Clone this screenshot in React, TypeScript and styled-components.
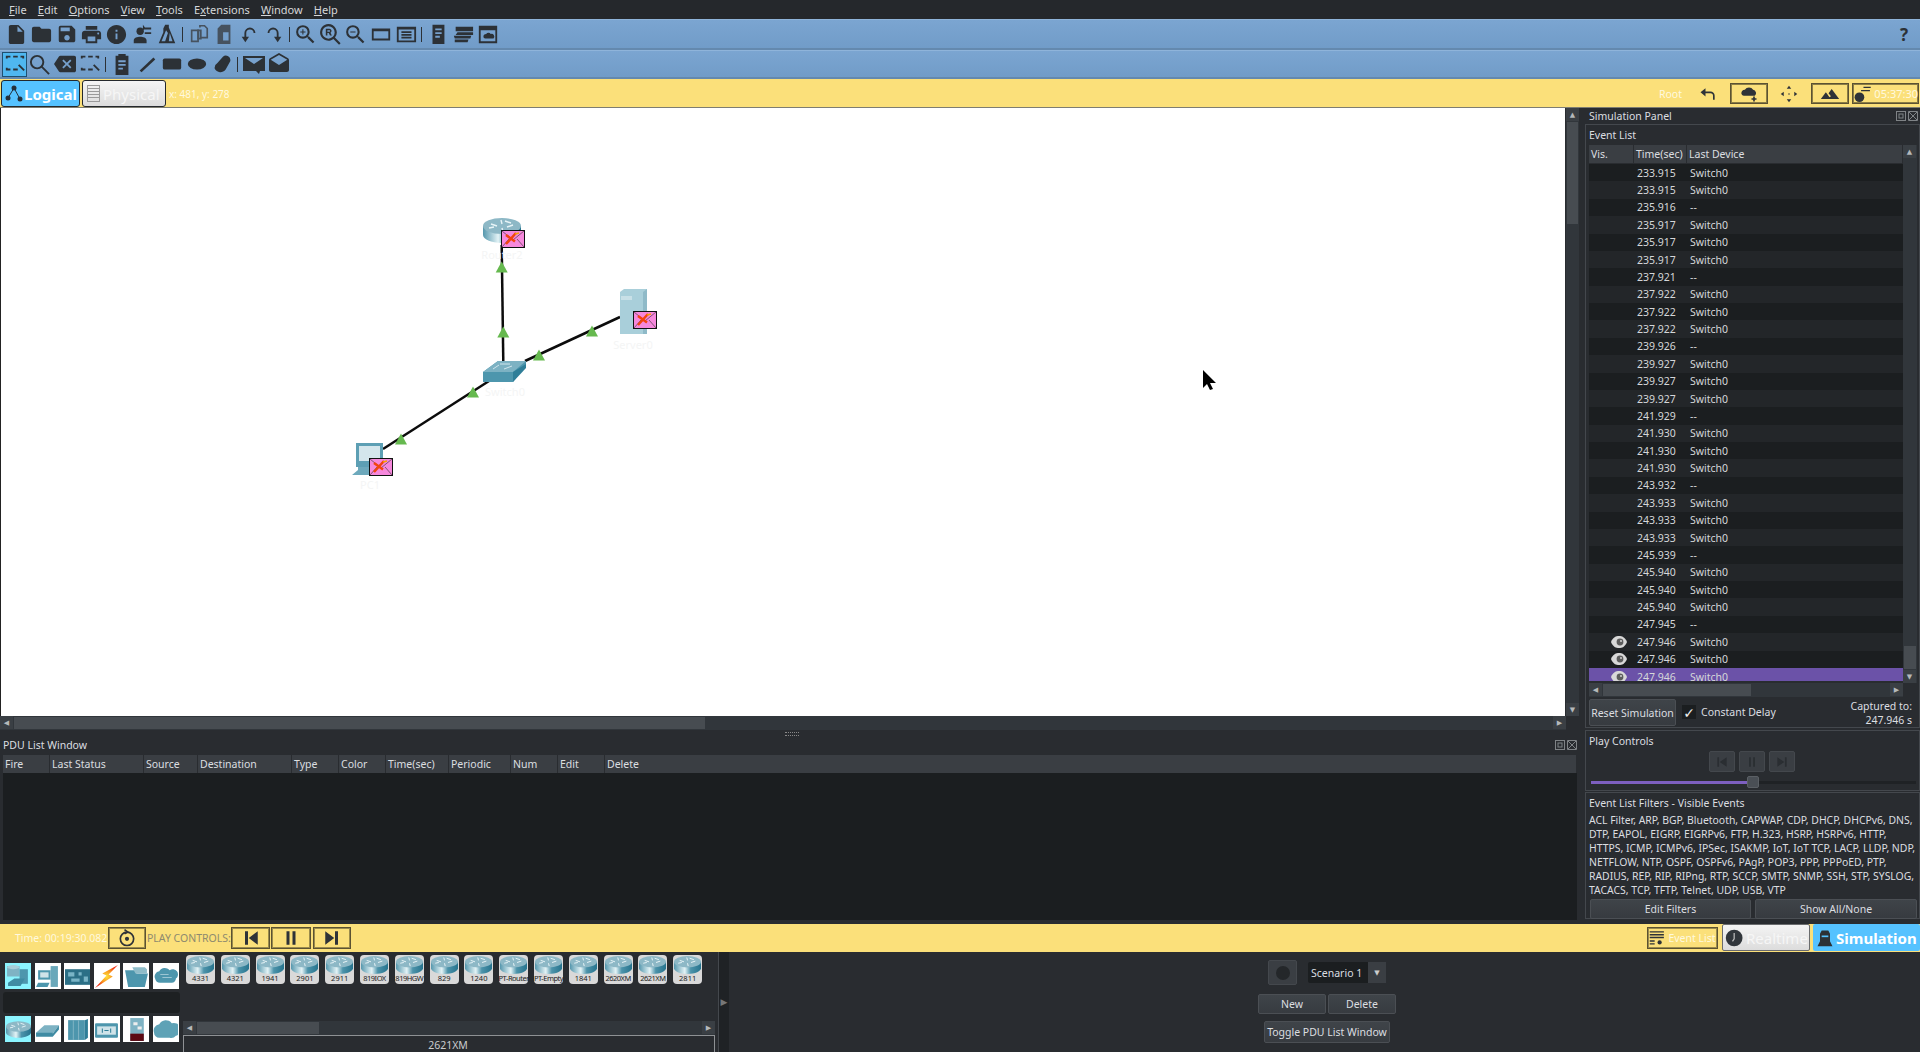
import React from "react";
import styled, { createGlobalStyle } from "styled-components";
import {
  MdInsertDriveFile, MdFolder, MdSave, MdPrint, MdInfo, MdZoomIn, MdZoomOut,
  MdBackspace, MdDrafts, MdTerrain,
} from "react-icons/md";

const Global = createGlobalStyle`
  html, body { margin: 0; padding: 0; height: 1052px; overflow: hidden; background: #292c30; }
  * { box-sizing: border-box; }
  body { font-family: "Noto Sans", "DejaVu Sans", sans-serif; font-size: 11px; color: #eff0f1; }
`;

const Page = styled.div`width:1920px;height:1052px;display:flex;flex-direction:column;overflow:hidden;background:#292c30;`;
const MenuBar = styled.div`height:19px;background:#25282c;display:flex;align-items:center;padding-left:9px;gap:11.2px;font-size:11px;color:#d5d7d9;`;
const MenuItem = styled.span`& u{text-underline-offset:1px;}`;
const ToolBar = styled.div<{ $h: number; $pad: number }>`
  height:${p => p.$h}px;display:flex;align-items:center;padding-left:${p => p.$pad}px;
  background:linear-gradient(#7ba5d1,#719cc8);border-top:1px solid #8fb4da;border-bottom:2px solid #6489ae;color:#2c3136;
`;
const ToolBtn = styled.div<{ $on?: boolean; $dim?: boolean }>`
  width:25px;height:25px;display:flex;align-items:center;justify-content:center;flex:none;
  color:${p => (p.$dim ? "#46525f" : "#2c3136")};
  ${p => p.$on && "background:#4fb7f0;border:1px solid #1f4f70;"}
  svg{display:block;}
`;
const ToolSep = styled.div`width:7px;height:15px;display:flex;justify-content:center;&::after{content:"";width:1px;height:100%;background:#2c3136;}`;
const Spacer = styled.div`flex:1;`;
const Help = styled.div`width:20px;font-size:17px;font-weight:700;color:#2c3136;`;

const YellowBar = styled.div`height:29px;background:#fbe07a;display:flex;align-items:center;padding:1px 1px 0 1px;border-bottom:1px solid #7d7d72;`;
const ModeTab = styled.div<{ $on?: boolean; $w: number }>`
  width:${p => p.$w}px;height:27px;border:1px solid #24282c;border-radius:3px;display:flex;align-items:center;gap:1px;padding-left:3px;flex:none;
  font-size:15px;overflow:hidden;
  ${p => p.$on ? "background:#55c2ff;color:#fff;font-weight:700;" : "background:linear-gradient(#f4f4f4,#dcdcdc);color:#f6f6f6;"}
`;
const Coords = styled.span`margin-left:3px;font-size:10px;color:#fff9df;`;
const RootLabel = styled.span`font-size:10.5px;color:#fff9df;margin-right:16px;`;
const BarIcon = styled.div<{ $w: number; $box?: boolean }>`
  width:${p => p.$w}px;height:21px;display:flex;align-items:center;justify-content:center;flex:none;color:#2f3338;
  ${p => p.$box && "border:1px solid #5b5232;box-shadow:inset 0 0 0 1px #8b7d45;"}
`;
const ClockText = styled.span`font-size:11px;color:#fff9df;margin-left:2px;`;
const Gap = styled.div<{ $w: number }>`width:${p => p.$w}px;flex:none;`;
const VGap = styled.div<{ $h: number }>`height:${p => p.$h}px;flex:none;`;

const Main = styled.div`display:flex;height:812px;flex:none;`;
const LeftCol = styled.div`width:1583px;display:flex;flex-direction:column;flex:none;`;
const CanvasRow = styled.div`height:608px;display:flex;flex:none;`;
const Canvas = styled.div`width:1565px;height:100%;background:#fff;border-left:1px solid #222;position:relative;overflow:hidden;margin-right:1px;`;
const CanvasSvg = styled.svg`position:absolute;left:0;top:0;`;
const VScroll = styled.div<{ $w?: number }>`width:${p => p.$w ?? 13}px;display:flex;flex-direction:column;background:#31363b;flex:none;`;
const ScrollArrow = styled.div`width:13px;height:13px;background:#3a3f44;display:flex;align-items:center;justify-content:center;flex:none;color:#b5b8ba;font-size:7px;line-height:1;`;
const VThumb = styled.div<{ $h: number }>`height:${p => p.$h}px;background:#474c51;border:1px solid #31363b;flex:none;`;
const Fill = styled.div`flex:1;`;
const HScroll = styled.div<{ $w?: number }>`height:14px;display:flex;background:#31363b;flex:none;${p => p.$w ? `width:${p.$w}px;` : ""}`;
const HThumb = styled.div<{ $w: number }>`width:${p => p.$w}px;background:#474c51;border:1px solid #31363b;flex:none;`;
const Splitter = styled.div`height:8px;display:flex;align-items:center;justify-content:center;flex:none;&::after{content:"";width:14px;height:2px;border-top:1px dotted #888;border-bottom:1px dotted #888;}`;

const PduWindow = styled.div`flex:1;display:flex;flex-direction:column;padding:0 5px 0 3px;`;
const DockTitle = styled.div`height:17px;display:flex;align-items:center;padding-bottom:4px;font-size:10.5px;color:#dcdee0;flex:none;`;
const DockBtns = styled.div`margin-left:auto;display:flex;gap:0;color:#7f8386;`;
const PduHead = styled.div`height:18px;display:grid;grid-template-columns:47px 94px 54px 94px 47px 47px 63px 62px 47px 47px 1fr;background:#3a3e43;flex:none;margin-right:1px;`;
const PduCell = styled.div`padding-left:2px;border-right:1px solid #292c30;font-size:10.5px;line-height:18px;color:#dcdee0;`;
const PduBody = styled.div`flex:1;background:#1b1e20;margin-right:1px;`;

const RightCol = styled.div`flex:1;display:flex;flex-direction:column;padding:0 0 0 2px;`;
const Group = styled.div<{ $h: number }>`height:${p => p.$h}px;border:1px solid #44484d;flex:none;display:flex;flex-direction:column;padding:0 1px 0 3px;`;
const GroupTitle = styled.div<{ $h?: number }>`height:${p => p.$h ?? 20}px;display:flex;align-items:center;font-size:10.5px;color:#dcdee0;flex:none;`;
const PanelTitle = styled.div`height:16px;display:flex;align-items:center;padding-left:4px;font-size:10.5px;color:#dcdee0;flex:none;padding-right:1px;`;
const EventTable = styled.div`display:flex;height:538px;flex:none;`;
const EventMain = styled.div`width:314px;flex:none;display:flex;flex-direction:column;`;
const EventHead = styled.div`height:18px;display:grid;grid-template-columns:45px 53px 1fr;background:#3a3e43;flex:none;margin-bottom:1px;`;
const EventRows = styled.div`height:517px;overflow:hidden;display:grid;grid-auto-rows:17.38px;`;
const EventRow = styled.div<{ $alt: boolean; $sel: boolean }>`
  display:grid;grid-template-columns:45px 53px 1fr;align-items:center;font-size:10.5px;color:#d5d7d9;
  background:${p => (p.$sel ? "#6b52a8" : p.$alt ? "#232629" : "#1b1e20")};
`;
const Vis = styled.div`padding-left:22px;display:flex;align-items:center;`;
const TimeCell = styled.div`padding-left:3px;`;
const DevCell = styled.div`padding-left:3px;`;
const EventTools = styled.div`height:33px;display:flex;align-items:flex-start;padding-top:2px;flex:none;`;
const Btn = styled.div<{ $w: number; $h: number }>`
  width:${p => p.$w}px;height:${p => p.$h}px;flex:none;display:flex;align-items:center;justify-content:center;
  background:linear-gradient(#3f4449,#373b40);border:1px solid #4b4f54;border-radius:2px;font-size:10.5px;color:#dcdee0;
`;
const Check = styled.div`width:14px;height:14px;margin:6px 0 0 6px;background:#1b1e20;display:flex;align-items:center;justify-content:center;font-size:14px;font-weight:700;color:#eee;flex:none;`;
const CheckLabel = styled.span`margin:6px 0 0 5px;font-size:10.5px;line-height:14px;color:#dcdee0;`;
const Captured = styled.div`margin-left:auto;text-align:right;font-size:10.5px;line-height:14px;color:#dcdee0;padding:0 6px 0 0;`;
const PlayRow = styled.div`display:flex;justify-content:center;gap:4px;padding-right:3px;`;
const PlayBtn = styled.div`width:26px;height:21px;background:#3a3e43;border:1px solid #44484d;border-radius:2px;display:flex;align-items:center;justify-content:center;color:#2a2e32;`;
const Slider = styled.div`height:12px;margin:4px 0 0 2px;display:flex;align-items:center;position:relative;`;
const SliderFill = styled.div`width:156px;height:3px;background:#7d5fc0;`;
const SliderRest = styled.div`flex:1;height:3px;background:#1f2225;margin-right:2px;`;
const SliderKnob = styled.div`position:absolute;left:156px;top:0;width:12px;height:12px;background:#4a4f55;border:1px solid #5b6065;border-radius:2px;`;
const FilterText = styled.div`font-size:10.42px;line-height:14px;color:#dcdee0;white-space:nowrap;height:86px;flex:none;`;
const BtnRow = styled.div`display:flex;gap:4px;padding:0 0 0 1px;`;

const BottomBar = styled.div`margin-top:4px;height:28px;background:#fbe07a;display:flex;align-items:center;flex:none;padding-bottom:1px;`;
const TimeLabel = styled.span`margin-left:15px;width:93px;flex:none;font-size:10.5px;color:#fff9df;`;
const PlayLabel = styled.span`width:84px;margin-left:1px;flex:none;font-size:10.5px;color:#8e8a6e;`;
const YellowBtn = styled.div<{ $w: number; $ml?: number }>`
  width:${p => p.$w}px;height:22px;margin-left:${p => p.$ml ?? 0}px;flex:none;border:1px solid #5b5232;box-shadow:inset 0 0 0 1px #9a8b4d;display:flex;align-items:center;justify-content:center;color:#2f3338;
`;
const EventBtnText = styled.span`font-size:10.5px;color:#fff9df;margin-left:2px;`;
const SimTab = styled.div<{ $on?: boolean; $w: number }>`
  width:${p => p.$w}px;height:27px;flex:none;border-radius:2px;display:flex;align-items:center;gap:1px;padding-left:2px;font-size:15px;
  ${p => p.$on ? "background:#55c2ff;color:#fff;font-weight:700;" : "background:linear-gradient(#f4f4f4,#dcdcdc);color:#f6f6f6;border:1px solid #6a6c6e;"}
`;

const Bottom = styled.div`height:100px;display:flex;flex:none;`;
const CategoryCol = styled.div`width:183px;padding:11px 0 0 5px;flex:none;display:flex;flex-direction:column;`;
const CatRow = styled.div`display:flex;gap:3.5px;height:26px;`;
const CatTile = styled.div<{ $on?: boolean }>`width:26px;height:26px;flex:none;background:${p => (p.$on ? "#8cf4ff" : "#fff")};display:flex;align-items:center;justify-content:center;`;
const CatStrip = styled.div`height:21px;margin:3px 3px 3px -2px;background:#1d2022;border-radius:3px;`;
const DevCol = styled.div`width:532px;flex:none;display:flex;flex-direction:column;`;
const DevTiles = styled.div`height:69px;display:flex;padding:3px 0 0 3px;gap:5.8px;flex:none;`;
const DevTile = styled.div`width:29px;height:29px;flex:none;background:#d9d9d9;border-radius:4px;display:flex;flex-direction:column;align-items:center;padding-top:1px;`;
const DevName = styled.span<{ $tight?: boolean }>`font-size:7.5px;line-height:8px;color:#222;white-space:nowrap;letter-spacing:${p => (p.$tight ? "-0.5px" : "0")};`;
const ModelBox = styled.div`height:17px;border:1px solid #8e9194;border-bottom:none;text-align:center;font-size:10.5px;line-height:18px;color:#c9cbcd;padding-right:2px;`;
const DividerCol = styled.div`margin-left:3px;width:11px;background:#1f2225;border-left:1px solid #44484d;display:flex;align-items:center;justify-content:center;color:#777;font-size:9px;flex:none;padding-bottom:2px;`;
const ScenarioPane = styled.div`flex:1;display:flex;flex-direction:column;align-items:flex-start;padding:8px 0 0 529px;`;
const ScenarioRow = styled.div`display:flex;align-items:center;margin-left:10px;height:25px;`;
const ScenarioIcon = styled.div`width:29px;height:25px;background:#3a3e43;border:1px solid #44484d;border-radius:2px;display:flex;align-items:center;justify-content:center;`;
const Dot = styled.div`width:14px;height:14px;border-radius:50%;background:#24272a;`;
const Combo = styled.div`margin-left:11px;width:78px;height:21px;background:#1b1e20;border-radius:2px;display:flex;align-items:center;padding-left:3px;font-size:10.5px;color:#dcdee0;`;
const ComboArrow = styled.div`margin-left:auto;width:18px;height:21px;background:#3a3e43;color:#ccc;font-size:7px;display:flex;align-items:center;justify-content:center;`;
const ScenarioBtns = styled.div`display:flex;gap:2px;margin-top:9px;`;
const ToggleWrap = styled.div`margin:7px 0 0 6px;`;

type P = { children?: React.ReactNode; s?: number; w?: number; h?: number; vb?: string };
const Svg = ({ children, s = 22, w, h, vb = "0 0 24 24" }: P) => (
  <svg width={w ?? s} height={h ?? s} viewBox={vb} fill="currentColor">{children}</svg>
);
const Stroke = ({ children, s = 22, sw = 2 }: P & { sw?: number }) => (
  <svg width={s} height={s} viewBox="0 0 24 24" fill="none" stroke="currentColor" strokeWidth={sw}>{children}</svg>
);

const tool1: (React.ReactNode | null)[] = [
  <MdInsertDriveFile size={23} />, <MdFolder size={23} />, <MdSave size={22} />, <MdPrint size={23} />, <MdInfo size={23} />,
  <Svg><circle cx="10" cy="9" r="4" /><path d="M3 22v-3c0-3 4-4 7-4s7 1 7 4v3zM14 5h8v2h-8zM15 10h7v2h-7zM13 2l3 4-3 2z" /></Svg>,
  <Svg><path d="M10 2h4v3l7 17H3l5-12V6zM11 8l-5 12h4l3-9zM15 11l-1 9h4z" fillRule="evenodd" /></Svg>,
  null,
  <Stroke sw={1.8}><path d="M4 8h7v12H4zM13 5V3h5l3 3v10h-7" /><path d="M11 8h3v9h-3z" fill="currentColor" fillOpacity=".4" /></Stroke>,
  <Svg><path fillRule="evenodd" d="M5 6l4-4h10v21H5zM11 10v9h6v-9z" /></Svg>,
  <Stroke><path d="M18 11a5 5 0 0 0-10 0v6" /><path d="M4 15l4 6 4-6z" fill="currentColor" stroke="none" /></Stroke>,
  <Stroke><path d="M6 11a5 5 0 0 1 10 0v6" /><path d="M12 15l4 6 4-6z" fill="currentColor" stroke="none" /></Stroke>,
  null,
  <MdZoomIn size={25} />,
  <Svg s={25}><path fillRule="evenodd" d="M10 2a8 8 0 0 1 6.300 12.900l5.400 5.400-1.500 1.500-5.400-5.400A8 8 0 1 1 10 2zm0 2a6 6 0 1 0 0 12 6 6 0 0 0 0-12zM7.500 6.500H11a2 2 0 0 1 1 3.700l1.300 2.800h-1.800L10.300 10.500H9V13H7.500zM9 8v1.300h2a.6.6 0 0 0 0-1.300z" /></Svg>,
  <MdZoomOut size={25} />,
  <Svg><path fillRule="evenodd" d="M2 6h20v13H2zM4 9v8h16V9z" /></Svg>,
  <Svg><path fillRule="evenodd" d="M2 4h21v17H2zM4 7v12h17V7zM7 9h11v2H7zM7 12h11v2H7zM7 15h11v2H7z" /></Svg>,
  null,
  <Svg><path fillRule="evenodd" d="M6 2h13v21H6zM9 6v2h7V6zM9 10v2h7v-2zM9 14v2h5v-2z" /></Svg>,
  <Svg><path d="M4 4h19v5H4zM6 10h17v3H4zM2 14h19l-1 3H3zM3 18h15l-1 3H3z" /></Svg>,
  <Svg><path fillRule="evenodd" d="M2 3h20v19H2zM4 8v12h16V8zM7 15a3 3 0 0 1 3-3 3 3 0 0 1 5 0 3 3 0 0 1 3 5H9a2 2 0 0 1-2-2z" /></Svg>,
];
const DashRect = () => (
  <svg width="22" height="22" viewBox="0 0 24 24" fill="none" stroke="currentColor" strokeWidth="2">
    <path d="M2 4h20M2 18h14M3 4v2M21 4v2M3 16v2" strokeDasharray="5 3" /><path d="M16 13l6 6" />
  </svg>
);
const tool2: (React.ReactNode | null)[] = [
  <DashRect />,
  <Stroke s={23}><circle cx="9.500" cy="9.500" r="6.500" /><path d="M14 14l8 8" /></Stroke>,
  <MdBackspace size={22} />, <DashRect />, null,
  <Svg><path fillRule="evenodd" d="M5 3h3V1h8v2h3v21H5zM8 8v2h8V8zM8 12v2h8v-2zM8 16v2h5v-2z" /></Svg>,
  <Svg><path d="M4 19L19 5l2 2L6 21z" /></Svg>,
  <Svg><rect x="2" y="6" width="20" height="12" rx="2" /></Svg>,
  <Svg><ellipse cx="12" cy="12" rx="10" ry="6" /></Svg>,
  <Svg><path d="M4 17a6 6 0 0 1 3-6l6-7a5 5 0 0 1 8 5l-5 9a7 7 0 0 1-12-1z" /></Svg>,
  null,
  <Svg s={24}><path fillRule="evenodd" d="M1 4h22v15h-5l-1 3-3-3H1zM3 6l9 6 9-6z" /></Svg>,
  <MdDrafts size={24} />,
];

const LogicalIcon = () => (
  <svg width="18" height="20" viewBox="0 0 18 20"><path d="M3 14L9 4l6 11" stroke="#25303a" fill="none" strokeWidth="1" /><circle cx="3" cy="14" r="2.500" fill="#25303a" /><circle cx="9" cy="4" r="2.500" fill="#25303a" /><circle cx="15" cy="15" r="2.500" fill="#25303a" /></svg>
);
const PhysicalIcon = () => (
  <svg width="16" height="20" viewBox="0 0 16 20" fill="none" stroke="#9a9a9a"><rect x="1.500" y="1.500" width="12" height="16" />{[4, 7, 10, 13].map(y => <path key={y} d={`M2 ${y}.5h11`} />)}</svg>
);

const Defs = () => (
  <svg width="0" height="0" style={{ position: "absolute" }}>
    <defs>
      <linearGradient id="rt" x1="0" x2="1" y1="0" y2="0">
        <stop offset="0" stopColor="#5597ad" /><stop offset=".4" stopColor="#e3f3f6" /><stop offset=".62" stopColor="#4c93aa" /><stop offset="1" stopColor="#27748e" />
      </linearGradient>
      <radialGradient id="bolt"><stop offset="0" stopColor="#ffe23a" /><stop offset=".6" stopColor="#f78a1c" /><stop offset="1" stopColor="#ee2a10" /></radialGradient>
    </defs>
  </svg>
);
const RouterShape = () => (
  <g>
    <path d="M0 8v9c0 4 8 8 19 8s19-4 19-8V8z" fill="url(#rt)" />
    <ellipse cx="19" cy="8" rx="19" ry="8" fill="#8db8c6" />
    <path d="M8 6l6 2M11 9l-5 1M22 3l6 2M30 7l-6 2M18 2l1 4M19 10l1 4" stroke="#e8f4f7" strokeWidth="1.400" fill="none" />
  </g>
);
const Envelope = ({ x, y }: { x: number; y: number }) => (
  <g transform={`translate(${x} ${y})`}>
    <rect x=".5" y=".5" width="23" height="17" fill="#f688dc" stroke="#111" />
    <path d="M1 1l11 9 11-9M1 17l7-8M23 17l-7-8" fill="none" stroke="#333" strokeWidth=".6" />
    <path d="M5 14L15 3M5 5l9 6.500" stroke="#f2440f" strokeWidth="2.500" fill="none" />
    <path d="M14 4l4-1" stroke="#f5a000" strokeWidth="1.500" />
  </g>
);
const Tri = ({ x, y }: { x: number; y: number }) => <path d={`M${x} ${y - 5.5}l6 11h-12z`} fill="#66b94f" />;
const Lbl = ({ x, y, t }: { x: number; y: number; t: string }) => <text x={x} y={y} fontSize="11" fill="#f4f5f5" textAnchor="middle" fontFamily="Noto Sans">{t}</text>;

const Diagram = () => (
  <CanvasSvg width="1564" height="608" viewBox="1 108 1564 608">
    <g stroke="#0c0c0c" strokeWidth="2.500" fill="none">
      <path d="M501.700 245L503.300 362" />
      <path d="M525 361L620 317" />
      <path d="M383 449L489 381" />
    </g>
    <g transform="translate(483 218)"><RouterShape /></g>
    <g>
      <path d="M483 372l15-11h28l0 4-13 17h-30z" fill="#4d96ad" />
      <path d="M483 372l15-11h28l-13 11z" fill="#7db2c3" />
      <path d="M513 372l13-8v4l-13 14z" fill="#2f7e98" />
      <path d="M493 369l6-4M504 369l8-3M500 364h10" stroke="#cfe5ec" strokeWidth="1" />
    </g>
    <g>
      <path d="M620 292l4-3h23v45h-27z" fill="#a9cfda" />
      <path d="M643 292l4-3v45l-4 0z" fill="#8fbac8" />
      <rect x="621" y="296" width="11" height="4" fill="#c8e0e7" />
    </g>
    <g>
      <rect x="356" y="443" width="27" height="24" fill="#5d9fb4" />
      <rect x="359" y="446" width="21" height="15" fill="#d4e6ec" />
      <path d="M358 467h24v3h-24zM352 475l6-5h24v5z" fill="#6da9bc" />
    </g>
    <Envelope x={501} y={230} />
    <Envelope x={633} y={311} />
    <Envelope x={369} y={458} />
    <Tri x={501.700} y={267} /><Tri x={503.300} y={332} /><Tri x={592} y={331} /><Tri x={539} y={355} /><Tri x={473} y={392} /><Tri x={401} y={439} />
    <Lbl x={502} y={259} t="Router2" /><Lbl x={633} y={349} t="Server0" /><Lbl x={505} y={396} t="Switch0" /><Lbl x={370} y={489} t="PC1" />
    <path d="M1203 370v18l4-4 3 6 3-1-3-6h6z" fill="#000" />
  </CanvasSvg>
);

const EyeIcon = () => (
  <svg width="16" height="12" viewBox="0 0 16 12"><path d="M0 6c2-5 5-6 8-6s6 1 8 6c-2 5-5 6-8 6s-6-1-8-6z" fill="#d8d8d8" /><circle cx="9" cy="6" r="3.400" fill="#5c5c5c" /><circle cx="10" cy="5" r=".9" fill="#ddd" /></svg>
);

const base: [string, string][] = [
  ["233.915", "Switch0"], ["233.915", "Switch0"], ["235.916", "--"], ["235.917", "Switch0"], ["235.917", "Switch0"], ["235.917", "Switch0"],
  ["237.921", "--"], ["237.922", "Switch0"], ["237.922", "Switch0"], ["237.922", "Switch0"], ["239.926", "--"], ["239.927", "Switch0"],
  ["239.927", "Switch0"], ["239.927", "Switch0"], ["241.929", "--"], ["241.930", "Switch0"], ["241.930", "Switch0"], ["241.930", "Switch0"],
  ["243.932", "--"], ["243.933", "Switch0"], ["243.933", "Switch0"], ["243.933", "Switch0"], ["245.939", "--"], ["245.940", "Switch0"],
  ["245.940", "Switch0"], ["245.940", "Switch0"], ["247.945", "--"], ["247.946", "Switch0"], ["247.946", "Switch0"], ["247.946", "Switch0"],
];
const pduCols = ["Fire", "Last Status", "Source", "Destination", "Type", "Color", "Time(sec)", "Periodic", "Num", "Edit", "Delete"];
const filters = [
  "ACL Filter, ARP, BGP, Bluetooth, CAPWAP, CDP, DHCP, DHCPv6, DNS,",
  "DTP, EAPOL, EIGRP, EIGRPv6, FTP, H.323, HSRP, HSRPv6, HTTP,",
  "HTTPS, ICMP, ICMPv6, IPSec, ISAKMP, IoT, IoT TCP, LACP, LLDP, NDP,",
  "NETFLOW, NTP, OSPF, OSPFv6, PAgP, POP3, PPP, PPPoED, PTP,",
  "RADIUS, REP, RIP, RIPng, RTP, SCCP, SMTP, SNMP, SSH, STP, SYSLOG,",
  "TACACS, TCP, TFTP, Telnet, UDP, USB, VTP",
];
const models: [string, boolean?][] = [["4331"], ["4321"], ["1941"], ["2901"], ["2911"], ["819IOX", true], ["819HGW", true], ["829"], ["1240"], ["PT-Router", true], ["PT-Empty", true], ["1841"], ["2620XM", true], ["2621XM", true], ["2811"]];
const DockIcons = () => (
  <DockBtns>
    <svg width="12" height="12" viewBox="0 0 12 12" fill="none" stroke="currentColor"><rect x="1.500" y="1.500" width="9" height="9" /><rect x="4" y="4" width="4" height="4" /></svg>
    <svg width="12" height="12" viewBox="0 0 12 12" fill="none" stroke="currentColor"><path d="M2 2l8 8M10 2l-8 8M1.500 1.500h9v9h-9z" /></svg>
  </DockBtns>
);
const catTop = [
  <Svg s={25}><rect x="1" y="2" width="12" height="10" fill="#7fb3c4" /><ellipse cx="7" cy="3" rx="6" ry="2" fill="#a8ced9" /><rect x="13" y="5" width="8" height="14" fill="#4d96ad" /><path d="M2 18l6-4h10l-4 7H2z" fill="#3f8ba3" /></Svg>,
  <Svg s={25}><rect x="3" y="6" width="12" height="9" fill="#4d96ad" /><rect x="5" y="8" width="8" height="5" fill="#cfe3e9" /><rect x="15" y="2" width="7" height="20" fill="#6aa8ba" /><path d="M3 18h11l-2 4H1z" fill="#4d96ad" /></Svg>,
  <Svg s={25}><rect x="0" y="5" width="24" height="15" fill="#2b6f86" /><path d="M3 8h6v4H3zM13 8h3v3h-3zM18 12h4v5h-4zM6 14h8v3H6z" fill="#79b4c6" /></Svg>,
  <Svg s={25}><path d="M23 1L8 9l4 2L1 23l17-11-4-2z" fill="url(#bolt)" /></Svg>,
  <Svg s={25}><path d="M1 6h9l2 3h11l-3 13H4z" fill="#4d96ad" /><path d="M8 3h12l2 2v4H11z" fill="#8fbcc9" /></Svg>,
  <Svg s={25}><path d="M2 14a5 5 0 0 1 4-7 6 6 0 0 1 10-1 5 5 0 0 1 6 8 4 4 0 0 1-4 4H7a5 5 0 0 1-5-4z" fill="#4d96ad" /><path d="M7 10h8M9 13h9" stroke="#9cc6d3" /></Svg>,
];
const catBot = [
  <svg width="25" height="17" viewBox="0 0 38 25"><RouterShape /></svg>,
  <Svg s={25}><path d="M1 15l8-7h14l-6 8H1z" fill="#7db2c3" /><path d="M1 15h16v4H1zM17 16l6-8v4l-6 7z" fill="#3f8ba3" /></Svg>,
  <Svg s={25}><rect x="3" y="3" width="16" height="19" fill="#4d96ad" /><path d="M19 3l3-1v18l-3 2z" fill="#2f7e98" /><path d="M8 3v19M13 3v19" stroke="#7db2c3" /></Svg>,
  <Svg s={25}><rect x="1" y="6" width="22" height="14" rx="1" fill="#4d96ad" /><rect x="3" y="9" width="18" height="8" fill="#cfe3e9" /><path d="M10 13h4M8 11v4M16 11v4" stroke="#2f7e98" /></Svg>,
  <Svg s={25}><rect x="6" y="1" width="13" height="22" fill="#7fb3c4" /><rect x="6" y="16" width="13" height="7" fill="#5c0a14" /><path d="M9 5h4v3H9zM13 9h4v3h-4z" fill="#eee" /></Svg>,
  <Svg s={25}><path d="M1 15a6 6 0 0 1 5-8 7 7 0 0 1 12-1 6 6 0 0 1 4 12 6 6 0 0 1-6 2H6a5 5 0 0 1-5-5z" fill="#5ea2b6" /></Svg>,
];

export default function App() {
  return (
    <Page>
      <Global />
      <Defs />
      <MenuBar>
        {["File", "Edit", "Options", "View", "Tools", "Extensions", "Window", "Help"].map(m => {
          const i = m === "Extensions" ? 1 : 0;
          return <MenuItem key={m}>{m.slice(0, i)}<u>{m[i]}</u>{m.slice(i + 1)}</MenuItem>;
        })}
      </MenuBar>
      <ToolBar $h={31} $pad={4}>
        {tool1.map((t, i) => t === null ? <ToolSep key={i} /> : <ToolBtn key={i} $dim={i === 8 || i === 9}>{t}</ToolBtn>)}
        <Spacer /><Help>?</Help>
      </ToolBar>
      <ToolBar $h={29} $pad={2}>
        {tool2.map((t, i) => t === null ? <ToolSep key={i} /> : <ToolBtn key={i} $on={i === 0}>{t}</ToolBtn>)}
      </ToolBar>
      <YellowBar>
        <ModeTab $on $w={79}><LogicalIcon />Logical</ModeTab>
        <Gap $w={2} />
        <ModeTab $w={84}><PhysicalIcon />Physical</ModeTab>
        <Coords>x: 481, y: 278</Coords>
        <Spacer />
        <RootLabel>Root</RootLabel>
        <BarIcon $w={20}><Svg s={20}><path d="M9 5L3 10l6 5v-4h6a3 3 0 0 1 3 3v5h2v-5a5 5 0 0 0-5-5H9z" /></Svg></BarIcon>
        <Gap $w={12} />
        <BarIcon $w={38} $box><Svg s={20}><path d="M3 12a4 4 0 0 1 4-5 6 6 0 0 1 10 0 4 4 0 0 1 2 7H6a3 3 0 0 1-3-2zM17 15h2v2h2v2h-2v2h-2v-2h-2v-2h2z" /></Svg></BarIcon>
        <Gap $w={11} />
        <BarIcon $w={20}><Svg s={18}><path d="M12 1l3 4H9zM12 23l-3-4h6zM1 12l4-3v6zM23 12l-4 3V9z" /><circle cx="12" cy="12" r="1" /></Svg></BarIcon>
        <Gap $w={12} />
        <BarIcon $w={38} $box><MdTerrain size={20} /></BarIcon>
        <Gap $w={3} />
        <BarIcon $w={67} $box>
          <Svg s={20}><circle cx="8" cy="16" r="6" /><path d="M10 7h11v1.500H10zM13 3h9v1.500h-9z" /></Svg>
          <ClockText>05:37:30</ClockText>
        </BarIcon>
      </YellowBar>
      <Main>
        <LeftCol>
          <CanvasRow>
            <Canvas><Diagram /></Canvas>
            <VScroll>
              <ScrollArrow>▲</ScrollArrow><VThumb $h={104} /><Fill />
              <ScrollArrow>▼</ScrollArrow>
            </VScroll>
          </CanvasRow>
          <HScroll $w={1566}>
            <ScrollArrow>◀</ScrollArrow><HThumb $w={693} /><Fill /><ScrollArrow>▶</ScrollArrow>
          </HScroll>
          <Splitter />
          <PduWindow>
            <DockTitle>PDU List Window<DockIcons /></DockTitle>
            <PduHead>{pduCols.map(c => <PduCell key={c}>{c}</PduCell>)}</PduHead>
            <PduBody />
          </PduWindow>
        </LeftCol>
        <RightCol>
          <PanelTitle>Simulation Panel<DockIcons /></PanelTitle>
          <Group $h={604}>
            <GroupTitle>Event List</GroupTitle>
            <EventTable>
              <EventMain>
                <EventHead><PduCell>Vis.</PduCell><PduCell>Time(sec)</PduCell><PduCell>Last Device</PduCell></EventHead>
                <EventRows>
                  {base.map(([t, d], i) => (
                    <EventRow key={i} $alt={i % 2 === 1} $sel={i === 29}>
                      <Vis>{i >= 27 && <EyeIcon />}</Vis>
                      <TimeCell>{t}</TimeCell>
                      <DevCell>{d}</DevCell>
                    </EventRow>
                  ))}
                </EventRows>
              </EventMain>
              <VScroll $w={14}>
                <ScrollArrow>▲</ScrollArrow><Fill /><VThumb $h={25} /><ScrollArrow>▼</ScrollArrow>
              </VScroll>
            </EventTable>
            <HScroll $w={314}>
              <ScrollArrow>◀</ScrollArrow><HThumb $w={150} /><Fill /><ScrollArrow>▶</ScrollArrow>
            </HScroll>
            <EventTools>
              <Btn $w={87} $h={27}>Reset Simulation</Btn>
              <Check>✓</Check>
              <CheckLabel>Constant Delay</CheckLabel>
              <Captured>Captured to:<br />247.946 s</Captured>
            </EventTools>
          </Group>
          <VGap $h={2} />
          <Group $h={61}>
            <GroupTitle>Play Controls</GroupTitle>
            <PlayRow>
              <PlayBtn><Svg s={14}><path d="M4 4h3v16H4zM20 4v16L8 12z" /></Svg></PlayBtn>
              <PlayBtn><Svg s={14}><path d="M7 4h3v16H7zM14 4h3v16h-3z" /></Svg></PlayBtn>
              <PlayBtn><Svg s={14}><path d="M17 4h3v16h-3zM4 4v16l12-8z" /></Svg></PlayBtn>
            </PlayRow>
            <Slider><SliderFill /><SliderRest /><SliderKnob /></Slider>
          </Group>
          <VGap $h={1} />
          <Group $h={127}>
            <GroupTitle $h={20}>Event List Filters - Visible Events</GroupTitle>
            <FilterText>{filters.map(l => <div key={l}>{l}</div>)}</FilterText>
            <BtnRow><Btn $w={161} $h={20}>Edit Filters</Btn><Btn $w={162} $h={20}>Show All/None</Btn></BtnRow>
          </Group>
        </RightCol>
      </Main>
      <BottomBar>
        <TimeLabel>Time: 00:19:30.082</TimeLabel>
        <YellowBtn $w={38}>
          <svg width="20" height="20" viewBox="0 0 24 24" fill="none" stroke="currentColor" strokeWidth="2"><circle cx="12" cy="13" r="8" /><circle cx="12" cy="13" r="1.500" fill="currentColor" /><path d="M9 2l4 3-4 2" /></svg>
        </YellowBtn>
        <PlayLabel>PLAY CONTROLS:</PlayLabel>
        <YellowBtn $w={39}><Svg s={18}><path d="M4 3h4v18H4zM21 3v18L9 12z" /></Svg></YellowBtn>
        <YellowBtn $w={40} $ml={1}><Svg s={18}><path d="M6 3h4v18H6zM14 3h4v18h-4z" /></Svg></YellowBtn>
        <YellowBtn $w={38} $ml={2}><Svg s={18}><path d="M16 3h4v18h-4zM3 3v18l12-9z" /></Svg></YellowBtn>
        <Spacer />
        <YellowBtn $w={71}>
          <Svg s={17}><path d="M1 3h20v2H1zM1 7h20v2H1zM1 11h20v2H1zM1 16h7v2H1zM1 20h7v2H1z" /><circle cx="15" cy="19" r="3" /></Svg>
          <EventBtnText>Event List</EventBtnText>
        </YellowBtn>
        <Gap $w={4} />
        <SimTab $w={88}><Svg s={20}><circle cx="11" cy="12" r="10" fill="#31363b" /><path d="M11 6v7l-2 3" stroke="#bbb" strokeWidth="1.500" fill="none" /></Svg>Realtime</SimTab>
        <Gap $w={3} />
        <SimTab $on $w={107}>
          <Svg s={20}><path d="M8 3h8l2 4v9l3 6H3l3-6V7z" fill="#2c3136" /><rect x="8" y="9" width="8" height="2" fill="#55c2ff" /></Svg>
          Simulation
        </SimTab>
      </BottomBar>
      <Bottom>
        <CategoryCol>
          <CatRow>{catTop.map((c, i) => <CatTile key={i} $on={i === 0}>{c}</CatTile>)}</CatRow>
          <CatStrip />
          <CatRow>{catBot.map((c, i) => <CatTile key={i} $on={i === 0}>{c}</CatTile>)}</CatRow>
        </CategoryCol>
        <DevCol>
          <DevTiles>
            {models.map(([m, t]) => (
              <DevTile key={m}>
                <svg width="27" height="18" viewBox="0 0 38 25"><RouterShape /></svg>
                <DevName $tight={t}>{m}</DevName>
              </DevTile>
            ))}
          </DevTiles>
          <HScroll>
            <ScrollArrow>◀</ScrollArrow><HThumb $w={124} /><Fill /><ScrollArrow>▶</ScrollArrow>
          </HScroll>
          <ModelBox>2621XM</ModelBox>
        </DevCol>
        <DividerCol>▶</DividerCol>
        <ScenarioPane>
          <ScenarioRow>
            <ScenarioIcon><Dot /></ScenarioIcon>
            <Combo>Scenario 1<ComboArrow>▼</ComboArrow></Combo>
          </ScenarioRow>
          <ScenarioBtns><Btn $w={68} $h={20}>New</Btn><Btn $w={68} $h={20}>Delete</Btn></ScenarioBtns>
          <ToggleWrap><Btn $w={126} $h={22}>Toggle PDU List Window</Btn></ToggleWrap>
        </ScenarioPane>
      </Bottom>
    </Page>
  );
}
